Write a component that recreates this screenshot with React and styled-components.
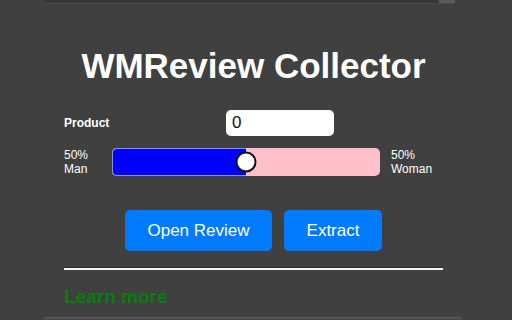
import React, { useState } from "react";
import styled, { createGlobalStyle } from "styled-components";

const GlobalStyle = createGlobalStyle`
  html, body {
    margin: 0;
    padding: 0;
    background: #404040;
    font-family: "Liberation Sans", Arial, sans-serif;
  }
`;

const Page = styled.div`
  width: 512px;
  height: 320px;
  overflow: hidden;
  display: flex;
  flex-direction: column;
`;

const TopEdge = styled.div`
  margin-left: 44px;
  width: 411px;
  height: 3px;
  background: #383838;
  border-bottom: 1px solid #4a4a4a;
  display: flex;
  justify-content: flex-end;
  span {
    width: 16px;
    background: #5a5a5a;
  }
`;

const Panel = styled.div`
  width: 379px;
  margin-left: 64px;
  display: flex;
  flex-direction: column;
`;

const Title = styled.h1`
  margin: 42px 0 0;
  font-size: 35px;
  line-height: 40px;
  font-weight: 700;
  color: #fff;
  text-align: center;
`;

const Row = styled.div`
  display: flex;
  align-items: center;
  margin-top: ${(p) => p.$top}px;
`;

const Label = styled.div`
  width: ${(p) => p.$width}px;
  flex-shrink: 0;
  color: #fff;
  font-size: 12px;
  line-height: 14px;
  font-weight: ${(p) => (p.$bold ? 700 : 400)};
  padding-left: ${(p) => p.$pad || 0}px;
`;

const Input = styled.input`
  width: 108px;
  height: 26px;
  box-sizing: border-box;
  border: none;
  border-radius: 5px;
  background: #fff;
  padding: 0 6px;
  font-family: "Liberation Sans", Arial, sans-serif;
  font-size: 17px;
  color: #111;
  outline: none;
`;

const Track = styled.div`
  position: relative;
  width: 268px;
  height: 28px;
  border-radius: 5px;
  background: #ffc0cb;
`;

const Fill = styled.div`
  height: 100%;
  box-sizing: border-box;
  background: #0000ff;
  border: 1px solid #8f8fe8;
  border-right: none;
  border-radius: 5px 0 0 5px;
`;

const Thumb = styled.div`
  position: absolute;
  top: 50%;
  width: 21px;
  height: 21px;
  box-sizing: border-box;
  border: 2px solid #111;
  border-radius: 50%;
  background: #fff;
  transform: translate(-50%, -50%);
`;

const Buttons = styled.div`
  display: flex;
  justify-content: center;
  gap: 12px;
  margin-top: 34px;
`;

const Button = styled.button`
  width: ${(p) => p.$width}px;
  height: 41px;
  border: none;
  border-radius: 5px;
  background: #007bff;
  color: #fff;
  font-family: "Liberation Sans", Arial, sans-serif;
  font-size: 17px;
  cursor: pointer;
`;

const Rule = styled.div`
  margin-top: 16px;
  height: 2px;
  background: #f4f4f4;
  border-top: 1px solid #2c2c2c;
`;

const Learn = styled.a`
  margin-top: 16px;
  font-size: 19px;
  line-height: 22px;
  font-weight: 700;
  color: #0a7d0a;
  text-decoration: none;
`;

const BottomEdge = styled.div`
  margin-top: auto;
  margin-left: 44px;
  width: 418px;
  height: 2px;
  background: #4a4a4a;
  border-top: 1px solid #5c5c5c;
  border-radius: 2px 2px 0 0;
`;

export default function App() {
  const [product, setProduct] = useState("0");
  const man = 50;

  return (
    <Page>
      <GlobalStyle />
      <TopEdge>
        <span />
      </TopEdge>
      <Panel>
        <Title>WMReview Collector</Title>

        <Row $top={24}>
          <Label $width={162} $bold>Product</Label>
          <Input value={product} onChange={(e) => setProduct(e.target.value)} />
        </Row>

        <Row $top={12}>
          <Label $width={48}>
            {man}%<br />Man
          </Label>
          <Track>
            <Fill style={{ width: `${man}%` }} />
            <Thumb style={{ left: `${man}%` }} />
          </Track>
          <Label $width={51} $pad={11}>
            {100 - man}%<br />Woman
          </Label>
        </Row>

        <Buttons>
          <Button $width={147}>Open Review</Button>
          <Button $width={98}>Extract</Button>
        </Buttons>

        <Rule />
        <Learn href="#">Learn more</Learn>
      </Panel>
      <BottomEdge />
    </Page>
  );
}
